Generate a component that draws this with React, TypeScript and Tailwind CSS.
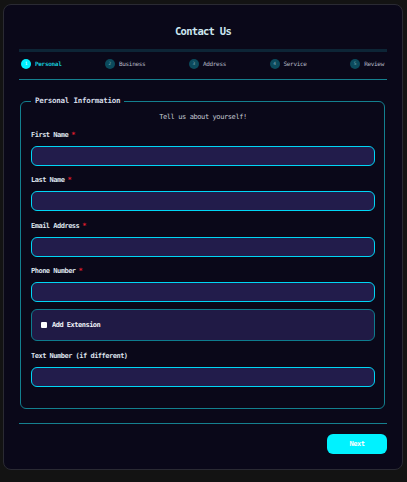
import React from "react";

const steps = ["Personal", "Business", "Address", "Service", "Review"];

function Field({ label, required, className = "" }: { label: string; required?: boolean; className?: string }) {
  return (
    <div className={className}>
      <label className="block text-[7px] leading-[10px] font-bold tracking-[-0.5px] text-[#dde2ec]">
        {label}
        {required && <span className="ml-[3px] text-[#e01c2c]">*</span>}
      </label>
      <input
        type="text"
        className="mt-[6px] block h-[20px] w-full rounded-[6px] border-[1.5px] border-[#00d6f5] bg-[#221c4b] outline-none"
      />
    </div>
  );
}

export default function App() {
  return (
    <div
      className="min-h-[482px] bg-[#131313] pl-[3px] pt-[4px]"
      style={{ fontFamily: '"DejaVu Sans Mono", "Liberation Mono", monospace' }}
    >
      <div className="w-[400px] rounded-[8px] border border-[#2a2a33] bg-[#0a0819] px-[15px] pt-[15px] pb-[15px]">
        <h1 className="text-center text-[10.5px] leading-[23px] font-bold tracking-[-0.7px] text-[#cde6f0]">
          Contact Us
        </h1>
        <div className="mt-[6px] h-[3px] bg-[#0d2536]" />
        <div className="mt-[7px] flex justify-between pl-[2px] pr-[3px]">
          {steps.map((s, i) => (
            <div key={s} className="flex items-center gap-[4px]">
              <span
                className={
                  i === 0
                    ? "flex h-[10px] w-[10px] items-center justify-center rounded-full bg-[#00f0ff] text-[4.5px] leading-none text-[#e8ffff]"
                    : "flex h-[10px] w-[10px] items-center justify-center rounded-full bg-[#0b4a5c] text-[4.5px] leading-none text-[#7fa6b2]"
                }
              >
                {i + 1}
              </span>
              <span
                className={
                  i === 0
                    ? "text-[6px] leading-[10px] font-bold tracking-[-0.3px] text-[#16c6d6]"
                    : "text-[6px] leading-[10px] tracking-[-0.3px] text-[#b4b9c6]"
                }
              >
                {s}
              </span>
            </div>
          ))}
        </div>
        <div className="mt-[10px] h-px bg-[#15808f]" />
        <fieldset className="mt-[16px] ml-px mr-[2px] rounded-[6px] border border-[#13808f] pl-[10px] pr-[9px] pb-[21px]">
          <legend className="px-[4px] text-[7.5px] leading-[10px] font-bold tracking-[-0.25px] text-[#d4dae6]">
            Personal Information
          </legend>
          <p className="mt-[6px] text-center text-[7px] leading-[10px] tracking-[-0.4px] text-[#c4c8d2]">
            Tell us about yourself!
          </p>
          <Field label="First Name" required className="mt-[8px]" />
          <Field label="Last Name" required className="mt-[9px]" />
          <Field label="Email Address" required className="mt-[9.5px]" />
          <Field label="Phone Number" required className="mt-[9.5px]" />
          <div className="mt-[7px] flex h-[32px] items-center gap-[5px] rounded-[6px] border border-[#0e7c8e] bg-[#201a45] px-[9px]">
            <input type="checkbox" className="h-[6px] w-[6px] appearance-none rounded-[1px] bg-white" />
            <span className="text-[7px] leading-[10px] font-bold tracking-[-0.5px] text-[#eef0f6]">Add Extension</span>
          </div>
          <Field label="Text Number (if different)" className="mt-[10px]" />
        </fieldset>
        <div className="mt-[14px] h-px bg-[#15808f]" />
        <div className="mt-[10px] flex justify-end">
          <button className="h-[20px] w-[60px] rounded-[6px] bg-[#00f2ff] text-[7px] font-bold tracking-[-0.45px] text-white">
            Next
          </button>
        </div>
      </div>
    </div>
  );
}
